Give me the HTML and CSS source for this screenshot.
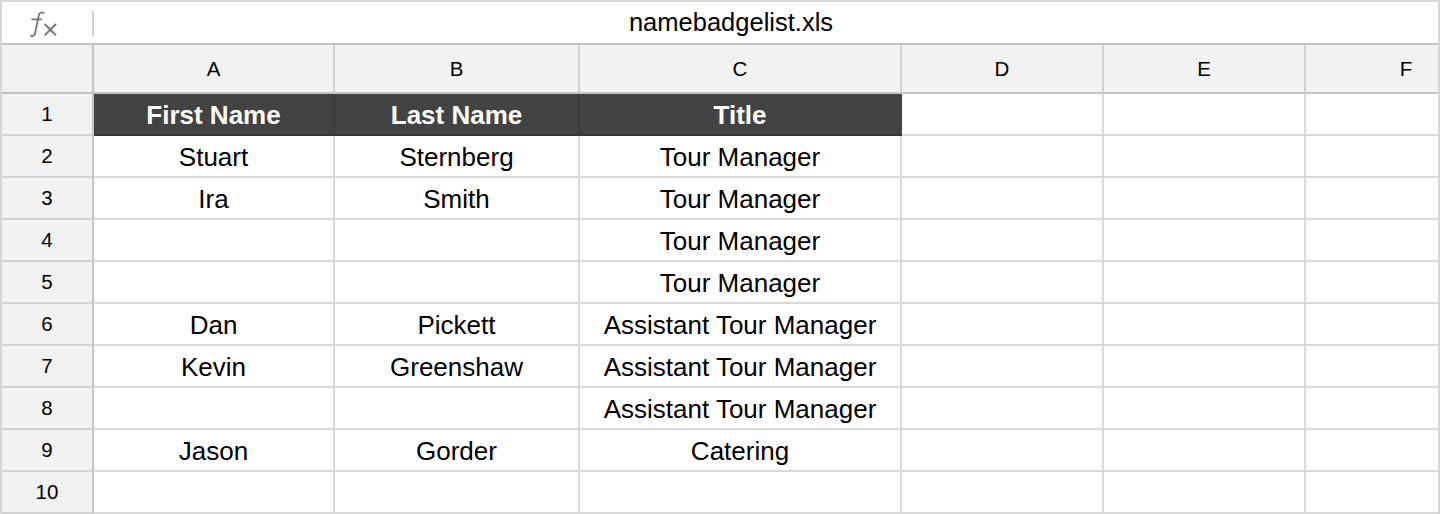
FILE: index.html
```html
<!DOCTYPE html>
<html>
<head>
<meta charset="utf-8">
<link rel="stylesheet" href="styles.css">
</head>
<body>
<div class="frame">
  <div class="formula">
    <div class="fx-box">
      <svg class="fx-icon" width="30" height="30" viewBox="0 0 30 30">
        <path d="M15.6 5.4 C14.2 3.9 11.6 4 10.9 7 L7.1 25 C6.6 27.6 5 28.6 3.1 27.6" fill="none" stroke="#777" stroke-width="1.8" stroke-linecap="round"/>
        <path d="M3.4 11.4 H13.8" fill="none" stroke="#777" stroke-width="1.7"/>
        <path d="M16.6 16 L28 27.4 M28 16 L16.6 27.4" fill="none" stroke="#777" stroke-width="2"/>
      </svg>
    </div>
    <div class="fx-sep"></div>
    <div class="fx-text">namebadgelist.xls</div>
  </div>
  <div class="grid">
    <div class="corner"></div>
    <div class="colhdr">A</div>
    <div class="colhdr">B</div>
    <div class="colhdr">C</div>
    <div class="colhdr">D</div>
    <div class="colhdr">E</div>
    <div class="colhdr">F</div>

    <div class="rowhdr">1</div>
    <div class="cell head">First Name</div>
    <div class="cell head">Last Name</div>
    <div class="cell head head-last">Title</div>
    <div class="cell"></div><div class="cell"></div><div class="cell"></div>

    <div class="rowhdr">2</div>
    <div class="cell">Stuart</div>
    <div class="cell">Sternberg</div>
    <div class="cell">Tour Manager</div>
    <div class="cell"></div><div class="cell"></div><div class="cell"></div>

    <div class="rowhdr">3</div>
    <div class="cell">Ira</div>
    <div class="cell">Smith</div>
    <div class="cell">Tour Manager</div>
    <div class="cell"></div><div class="cell"></div><div class="cell"></div>

    <div class="rowhdr">4</div>
    <div class="cell"></div>
    <div class="cell"></div>
    <div class="cell">Tour Manager</div>
    <div class="cell"></div><div class="cell"></div><div class="cell"></div>

    <div class="rowhdr">5</div>
    <div class="cell"></div>
    <div class="cell"></div>
    <div class="cell">Tour Manager</div>
    <div class="cell"></div><div class="cell"></div><div class="cell"></div>

    <div class="rowhdr">6</div>
    <div class="cell">Dan</div>
    <div class="cell">Pickett</div>
    <div class="cell">Assistant Tour Manager</div>
    <div class="cell"></div><div class="cell"></div><div class="cell"></div>

    <div class="rowhdr">7</div>
    <div class="cell">Kevin</div>
    <div class="cell">Greenshaw</div>
    <div class="cell">Assistant Tour Manager</div>
    <div class="cell"></div><div class="cell"></div><div class="cell"></div>

    <div class="rowhdr">8</div>
    <div class="cell"></div>
    <div class="cell"></div>
    <div class="cell">Assistant Tour Manager</div>
    <div class="cell"></div><div class="cell"></div><div class="cell"></div>

    <div class="rowhdr">9</div>
    <div class="cell">Jason</div>
    <div class="cell">Gorder</div>
    <div class="cell">Catering</div>
    <div class="cell"></div><div class="cell"></div><div class="cell"></div>

    <div class="rowhdr">10</div>
    <div class="cell"></div>
    <div class="cell"></div>
    <div class="cell"></div>
    <div class="cell"></div><div class="cell"></div><div class="cell"></div>
  </div>
</div>
</body>
</html>
```
FILE: styles.css
```css
* { box-sizing: border-box; }
html, body { margin: 0; padding: 0; background: #fff; }
body {
  font-family: "Liberation Sans", Arial, sans-serif;
  color: #000;
}
.frame {
  width: 1440px;
  height: 514px;
  border: 2px solid #d6d6d6;
  border-bottom: none;
  overflow: hidden;
  background: #fff;
}
.formula {
  height: 43px;
  border-bottom: 2px solid #c4c4c4;
  display: flex;
  align-items: center;
}
.fx-box {
  width: 90px;
  height: 41px;
  display: flex;
  align-items: center;
  padding-left: 26px;
}
.fx-icon { display: block; margin-top: 1px; }
.fx-sep {
  width: 2px;
  height: 25px;
  background: #c9ceda;
  margin-top: 1px;
}
.fx-text {
  flex: 1;
  text-align: center;
  font-size: 25.5px;
  padding-right: 70px;
  line-height: 41px;
}
.grid {
  display: grid;
  grid-template-columns: 92px 241px 245px 322px 202px 202px 202px;
  grid-template-rows: 49px repeat(10, 42px);
  width: 1506px;
}
.corner, .colhdr, .rowhdr {
  background: #f2f2f2;
  border-right: 2px solid #d2d2d2;
  border-bottom: 2px solid #d2d2d2;
  font-size: 20.5px;
  display: flex;
  align-items: center;
  justify-content: center;
}
.corner, .colhdr { border-bottom-color: #c4c4c4; }
.corner, .rowhdr { border-right-color: #c4c4c4; }
.cell {
  border-right: 2px solid #dadada;
  border-bottom: 2px solid #dadada;
  font-size: 26px;
  padding-top: 2px;
  display: flex;
  align-items: center;
  justify-content: center;
  white-space: nowrap;
}
.cell.head {
  background: #434343;
  color: #fff;
  font-weight: bold;
  border-right-color: #3c3c3c;
  border-bottom-color: #353535;
}
.cell.head-last { border-right-color: #434343; }
```
